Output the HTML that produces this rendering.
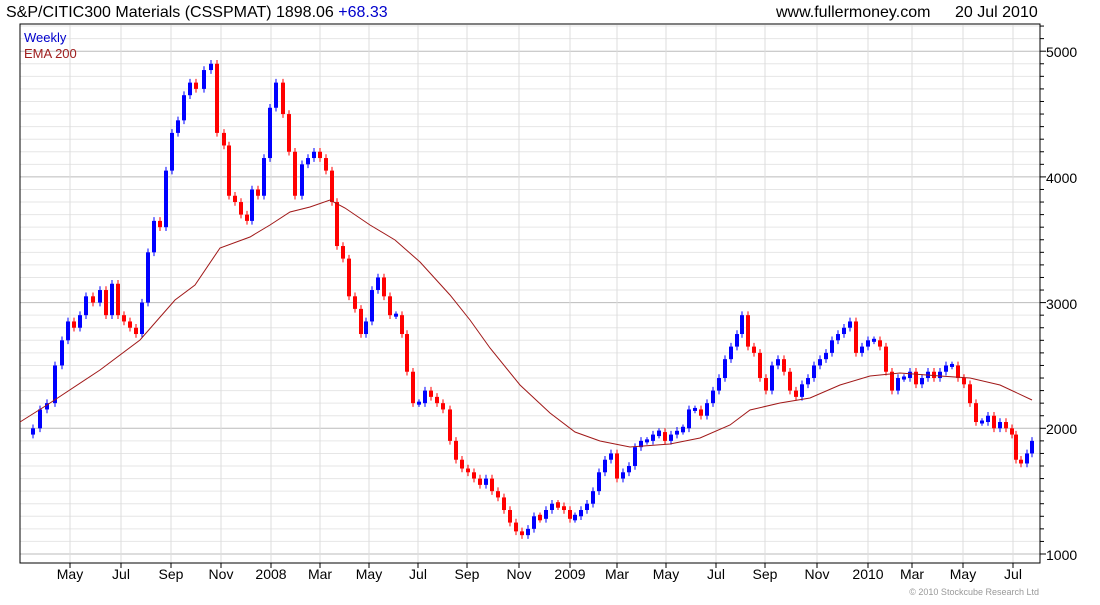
<!DOCTYPE html><html><head><meta charset="utf-8"><style>
body{margin:0;background:#fff;width:1100px;height:600px;overflow:hidden;font-family:"Liberation Sans",sans-serif}
</style></head><body>
<svg id="s" width="1100" height="600" xmlns="http://www.w3.org/2000/svg" font-family="Liberation Sans, sans-serif">
<text x="6" y="17" font-size="16" fill="#000">S&amp;P/CITIC300 Materials (CSSPMAT) 1898.06 <tspan fill="#00c">+68.33</tspan></text>
<text x="776" y="17" font-size="16" fill="#000">www.fullermoney.com</text>
<text x="955" y="17" font-size="16" fill="#000">20 Jul 2010</text>
<g id="grid"></g>
<rect x="20" y="24" width="1020" height="539" fill="none" stroke="#000" stroke-width="1"/>
<text x="24" y="42" font-size="13" fill="#00c">Weekly</text>
<text x="24" y="58" font-size="13" fill="#a02020">EMA 200</text>
<g id="c"></g>
<polyline fill="none" stroke="#a01818" stroke-width="1" points="20,422 47,405 100,370 140,340 175,300 195,285 220,248 250,237 270,225 290,212 310,207 330,200 345,208 370,225 395,240 420,262 450,295 470,320 490,348 520,385 550,413 575,432 600,441 630,447 670,444 700,438 730,425 750,410 780,403 810,398 840,385 870,376 900,373 940,376 970,378 1000,385 1032,400"/>
<g font-size="14" fill="#000">
<text x="1046" y="57">5000</text><text x="1046" y="183">4000</text><text x="1046" y="309">3000</text><text x="1046" y="434">2000</text><text x="1046" y="560">1000</text>
</g>
<g font-size="14" fill="#000" text-anchor="middle" id="xl"></g>
<text x="1039" y="595" font-size="9" fill="#999" text-anchor="end">© 2010 Stockcube Research Ltd</text>
</svg>
<script>
var NS="http://www.w3.org/2000/svg";
function el(p,t,a){var e=document.createElementNS(NS,t);for(var k in a)e.setAttribute(k,a[k]);p.appendChild(e);return e;}
var g=document.getElementById("grid");
function Y(p){return 554-(p-1000)*0.1257;}
for(var v=1000;v<=5300;v+=100){var y=Y(v);if(y<25||y>562)continue;var maj=v%1000==0;
el(g,"line",{x1:20,x2:1040,y1:y,y2:y,stroke:maj?"#bbb":"#e6e6e6","stroke-width":1});
el(g,"line",{x1:1040,x2:maj?1046:1044,y1:y,y2:y,stroke:"#000"});}
var xs=[70,121,171,221,271,320,369,418,467,519,570,617,666,716,765,817,868,912,963,1013];
var lb=["May","Jul","Sep","Nov","2008","Mar","May","Jul","Sep","Nov","2009","Mar","May","Jul","Sep","Nov","2010","Mar","May","Jul"];
var xl=document.getElementById("xl");
xs.forEach(function(x,i){el(g,"line",{x1:x,x2:x,y1:25,y2:563,stroke:"#ddd"});el(g,"line",{x1:x,x2:x,y1:563,y2:568,stroke:"#000"});
var t=el(xl,"text",{x:x,y:579});t.textContent=lb[i];});
var d=[[27,1950],[33,2000],[40,2150],[47,2200],[55,2500],[62,2700],[68,2850],[74,2800],[80,2900],[86,3050],[93,3000],[100,3100],[106,2900],[112,3150],[118,2900],[124,2850],[130,2800],[136,2750],[142,3000],[148,3400],[154,3650],[160,3600],[166,4050],[172,4350],[178,4450],[184,4650],[190,4750],[196,4700],[204,4850],[211,4900],[217,4350],[224,4250],[229,3850],[235,3800],[241,3700],[247,3650],[252,3900],[258,3850],[264,4150],[270,4550],[276,4750],[283,4500],[289,4200],[295,3850],[302,4100],[308,4150],[314,4200],[320,4150],[326,4050],[332,3800],[337,3450],[343,3350],[349,3050],[355,2950],[361,2750],[366,2850],[372,3100],[378,3200],[384,3050],[390,2900],[396,2900],[402,2750],[407,2450],[413,2200],[419,2200],[425,2300],[431,2250],[437,2200],[443,2150],[450,1900],[456,1750],[462,1680],[468,1650],[474,1600],[480,1550],[486,1600],[492,1500],[498,1450],[504,1350],[510,1250],[516,1180],[522,1150],[528,1200],[534,1300],[540,1280],[546,1350],[552,1400],[558,1380],[564,1350],[570,1280],[575,1300],[581,1350],[587,1400],[593,1500],[599,1650],[605,1750],[611,1800],[617,1600],[623,1650],[629,1700],[635,1850],[641,1900],[647,1900],[653,1950],[659,1970],[665,1900],[671,1950],[677,1980],[683,2000],[689,2150],[695,2150],[701,2100],[707,2200],[713,2300],[719,2400],[725,2550],[731,2650],[737,2750],[742,2900],[748,2650],[754,2600],[760,2400],[766,2300],[772,2500],[778,2550],[784,2450],[790,2300],[796,2250],[802,2350],[808,2400],[814,2500],[820,2550],[826,2600],[832,2700],[838,2750],[844,2800],[850,2850],[856,2600],[862,2650],[868,2700],[874,2700],[880,2650],[886,2450],[892,2300],[898,2400],[904,2400],[910,2450],[916,2350],[922,2400],[928,2450],[934,2400],[940,2450],[946,2500],[952,2500],[958,2400],[964,2350],[970,2200],[976,2050],[982,2050],[988,2100],[994,2000],[1000,2050],[1006,2000],[1012,1950],[1016,1750],[1021,1720],[1027,1800],[1032,1900]];
var c=document.getElementById("c");
for(var i=1;i<d.length;i++){var o=d[i-1][1],cl=d[i][1],x=d[i][0];var up=cl>=o;var col=up?"#0000ff":"#ff0000";
var hi=Math.max(o,cl)+30,lo=Math.min(o,cl)-30;
el(c,"line",{x1:x,x2:x,y1:Y(hi),y2:Y(lo),stroke:col,"stroke-width":1});
var t=Y(Math.max(o,cl)),b=Y(Math.min(o,cl));if(b-t<3){t-=1.5;b+=1.5;}
el(c,"rect",{x:x-2,y:t,width:4,height:b-t,fill:col});}
</script>
</body></html>
